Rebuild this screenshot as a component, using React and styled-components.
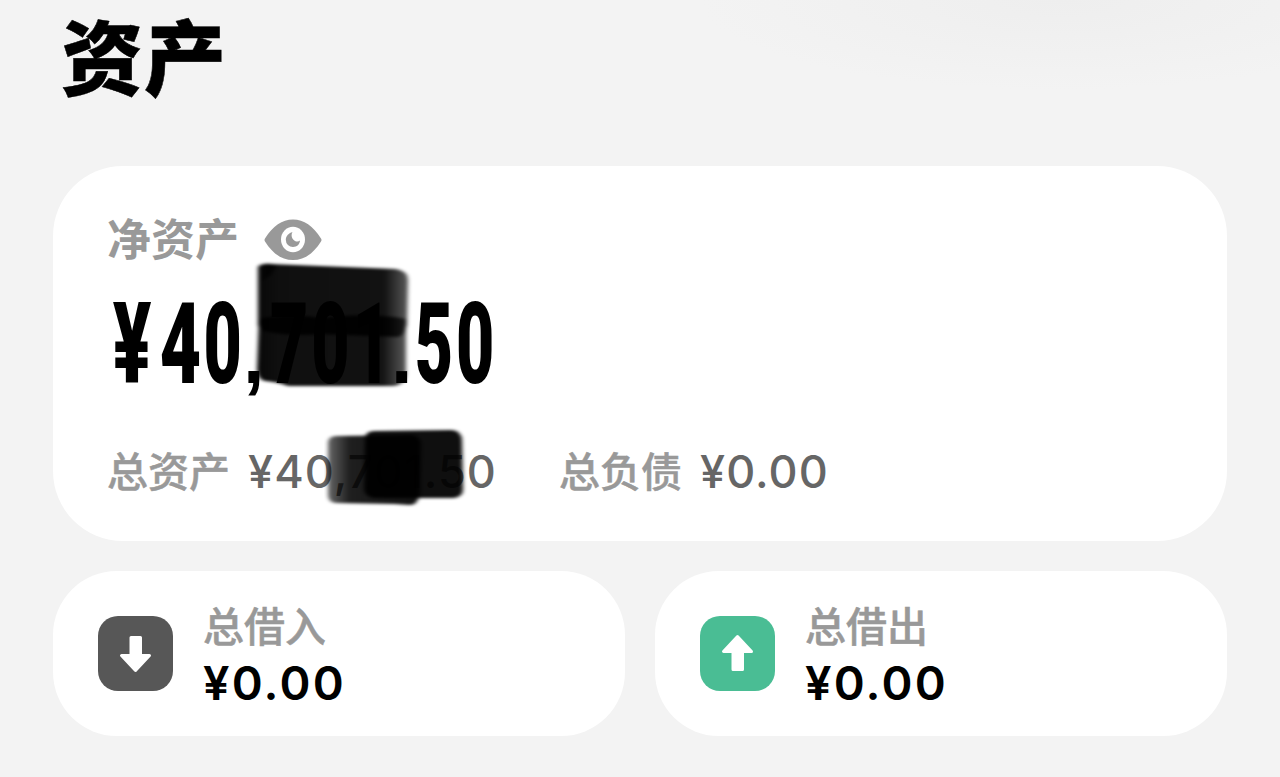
import React from 'react'
import styled, { createGlobalStyle } from 'styled-components';

const GlobalStyle = createGlobalStyle`
  * {
    box-sizing: border-box;
  }

  body {
    margin: 0;
    background: #f3f3f3;
    font-family: Inter, 'Noto Sans CJK SC', sans-serif;
  }
`;

const EyeIcon = () => (
    <Eye viewBox='0 0 58 42'>
        <path fill='#999' d='M1 22.500Q0 21 1 19.500C9 7 18 0.500 29 0.500S49 7 57 19.500Q58 21 57 22.500C49 35 40 41 29 41S9 35 1 22.500Z' />
        <ellipse cx='29' cy='20.500' rx='12' ry='12.700' fill='#fff' />
        <path fill='#999' d='M28.500 13C25 14 21.800 17 21.800 20.800A7.200 7.200 0 0 0 29 28C33 28 35.800 25.200 36 21.500Q34 23.300 31.500 22.200C28 20.500 26.500 16.500 28.500 13Z' />
    </Eye>
)

const ArrowIcon = ({arriba}) => (
    <Arrow viewBox='0 0 75 75' $arriba={arriba}>
        <path
            fill='#fff' stroke='#fff' strokeWidth='3' strokeLinejoin='round'
            d='M33 21.500H42.500V39.500H51.500L37.500 54.500L23.500 39.500H33Z'
        />
    </Arrow>
)

const BigScribble = () => (
    <Scribble viewBox='0 0 164 136' $left={143} $top={-13} $width={164} $height={136}>
        <defs>
            <linearGradient id='trazo' x1='0' x2='1' y1='0' y2='0'>
                <stop offset='0' stopOpacity='0.97' />
                <stop offset='0.15' stopOpacity='0.94' />
                <stop offset='0.84' stopOpacity='0.93' />
                <stop offset='1' stopOpacity='0.65' />
            </linearGradient>
            <filter id='suave' x='-10%' y='-10%' width='120%' height='120%'>
                <feGaussianBlur stdDeviation='2.200 1.500' />
            </filter>
        </defs>
        <g filter='url(#suave)'>
            <path fill='url(#trazo)' d='M8 10Q11 6 20 7L146 12Q158 14 158 23L157 68Q154 79 148 80L70 77Q40 80 14 74Q7 72 8 64Z' />
            <path fill='url(#trazo)' d='M9 62Q40 55 70 61Q120 55 156 62L156 118Q154 128 144 129L38 129Q28 125 15 124Q7 122 7 112Z' />
            <path d='M13 8Q17 5 27 8L21 18L12 24Z' fillOpacity='0.7' />
        </g>
    </Scribble>
)

const SmallScribble = () => (
    <Scribble viewBox='0 0 148 88' $left={76} $top={-19} $width={148} $height={88}>
        <defs>
            <linearGradient id='borde' x1='0' x2='1' y1='0' y2='0'>
                <stop offset='0' stopOpacity='0.6' />
                <stop offset='0.23' stopOpacity='0.88' />
                <stop offset='1' stopOpacity='0.93' />
            </linearGradient>
        </defs>
        <g filter='url(#suave)'>
            <path fill='url(#borde)' d='M4 19Q5 13 12 13L88 12Q97 13 97 22L96 72Q93 82 86 82L70 81L12 80Q4 79 4 72Z' />
            <path fillOpacity='0.94' d='M41 15Q42 8 50 8L128 7Q138 8 138 18L139 66Q139 74 130 75L50 75Q41 74 40 66Z' />
        </g>
    </Scribble>
)

const LoanCard = ({titulo, monto, color, arriba}) => (
    <SmallCard>
        <IconBox $color={color}>
            <ArrowIcon arriba={arriba} />
        </IconBox>
        <div>
            <LoanTitle>{titulo}</LoanTitle>
            <LoanAmount>{monto}</LoanAmount>
        </div>
    </SmallCard>
)

export default function App() {
    return (
        <Page lang='zh-CN'>
            <GlobalStyle />
            <Title>资产</Title>
            <MainCard>
                <NetHeader>
                    <NetLabel>净资产</NetLabel>
                    <EyeIcon />
                </NetHeader>
                <NetAmount>
                    <Condensed>
                        <Wide $width={90} $pad={9}>¥</Wide><Wide $width={75} $pad={0}>4</Wide>0<Mark $width={30} $gap={13}>,</Mark>701<Mark $width={28} $gap={8}>.</Mark>50
                    </Condensed>
                    <BigScribble />
                </NetAmount>
                <Totals>
                    <TotalLabel>总资产</TotalLabel>
                    <TotalAmount $width={311}>
                        ¥40,701.50
                        <SmallScribble />
                    </TotalAmount>
                    <TotalLabel>总负债</TotalLabel>
                    <TotalAmount>¥0.00</TotalAmount>
                </Totals>
            </MainCard>
            <Loans>
                <LoanCard titulo='总借入' monto='¥0.00' color='#575757' />
                <LoanCard titulo='总借出' monto='¥0.00' color='#4abd94' arriba />
            </Loans>
        </Page>
    )
}

const Page = styled.main`
  width: 1280px;
  height: 777px;
  padding: 17px 53px 0;
  overflow: hidden;
  background: radial-gradient(ellipse 360px 90px at 1060px 0, #eeeeee, #f3f3f3);
`;

const Title = styled.h1`
  margin: 0;
  padding-left: 8px;
  height: 149px;
  font-size: 82px;
  line-height: 86px;
  font-weight: 900;
  letter-spacing: 1px;
  color: #000;
  -webkit-text-stroke: 0.5px #000;
`;

const MainCard = styled.section`
  height: 375px;
  padding: 44px 54px 0;
  border-radius: 70px;
  background: #fff;
`;

const NetHeader = styled.div`
  display: flex;
  align-items: center;
  gap: 25px;
  height: 60px;
`;

const NetLabel = styled.span`
  font-size: 44px;
  line-height: 60px;
  font-weight: 700;
  color: #999;
`;

const Eye = styled.svg`
  width: 58px;
  height: 42px;
`;

const NetAmount = styled.div`
  position: relative;
  height: 167px;
  padding-top: 15px;
`;

const Condensed = styled.span`
  display: block;
  width: max-content;
  font-family: Roboto, sans-serif;
  font-size: 113px;
  line-height: 120px;
  font-weight: 900;
  letter-spacing: 5px;
  color: #000;
  transform: scaleX(0.585);
  transform-origin: left;
`;

// the yen sign and the 4 are wider than the other figures
const Wide = styled.span`
  display: inline-block;
  width: ${({ $width }) => $width}px;
  padding-left: ${({ $pad }) => $pad}px;
  transform: scaleX(1.08);
  transform-origin: left;
`;

// square punctuation, set smaller than the digits
const Mark = styled.span`
  display: inline-block;
  width: ${({ $width }) => $width}px;
  margin-right: ${({ $gap }) => $gap}px;
  font-family: 'Liberation Sans', sans-serif;
  font-size: 80px;
  font-weight: 700;
  letter-spacing: 0;
  text-align: center;
  transform: scaleX(1.65);
`;

const Scribble = styled.svg`
  position: absolute;
  left: ${({ $left }) => $left}px;
  top: ${({ $top }) => $top}px;
  width: ${({ $width }) => $width}px;
  height: ${({ $height }) => $height}px;
`;

const Totals = styled.div`
  display: flex;
  align-items: center;
  height: 70px;
`;

const TotalLabel = styled.span`
  width: 141px;
  font-size: 41px;
  line-height: 60px;
  font-weight: 500;
  color: #999;
  -webkit-text-stroke: 0.5px #999;
`;

const TotalAmount = styled.span`
  position: relative;
  width: ${({ $width }) => $width ? `${$width}px` : 'auto'};
  font-size: 45px;
  line-height: 60px;
  font-weight: 530;
  letter-spacing: 1.1px;
  color: #666;
`;

const Loans = styled.div`
  display: grid;
  grid-template-columns: 1fr 1fr;
  gap: 30px;
  margin-top: 30px;
`;

const SmallCard = styled.section`
  display: flex;
  align-items: center;
  gap: 30px;
  height: 165px;
  padding-left: 45px;
  border-radius: 64px;
  background: #fff;
`;

const IconBox = styled.div`
  width: 75px;
  height: 75px;
  border-radius: 20px;
  background: ${({ $color }) => $color};
`;

const Arrow = styled.svg`
  display: block;
  width: 75px;
  height: 75px;
  transform: ${({ $arriba }) => $arriba ? 'scaleY(-1)' : 'none'};
`;

const LoanTitle = styled.div`
  padding-top: 3px;
  font-size: 41px;
  line-height: 56px;
  font-weight: 500;
  color: #999;
  -webkit-text-stroke: 0.5px #999;
`;

const LoanAmount = styled.div`
  font-size: 47px;
  line-height: 56px;
  font-weight: 640;
  letter-spacing: 2.2px;
  color: #000;
`;
